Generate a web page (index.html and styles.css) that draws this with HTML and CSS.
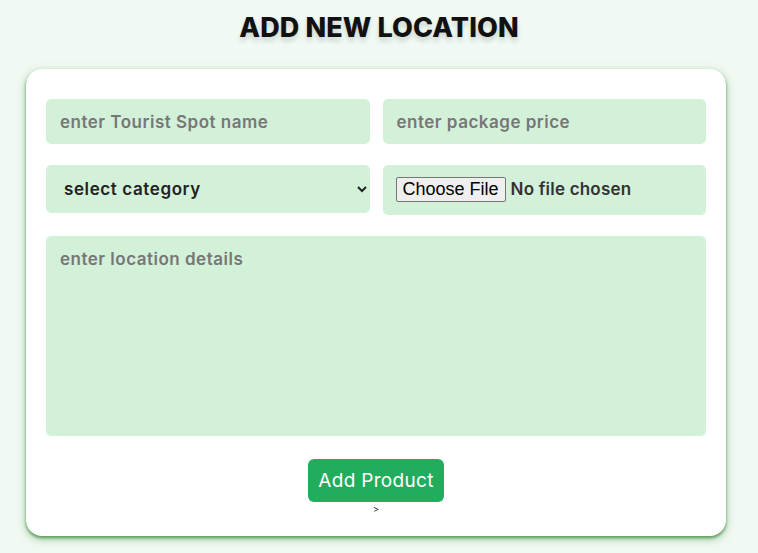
FILE: index.html
```html
<!DOCTYPE html>
<html lang="en">
<head>
<meta charset="utf-8">
<title>Add New Location</title>
<link rel="stylesheet" href="styles.css">
</head>
<body>
<h1 class="title">ADD NEW LOCATION</h1>
<form class="card">
  <div class="grid">
    <input class="field" type="text" placeholder="enter Tourist Spot name">
    <input class="field" type="text" placeholder="enter package price">
    <select class="field select">
      <option>select category</option>
    </select>
    <input class="field file" type="file">
    <textarea class="field area" placeholder="enter location details"></textarea>
  </div>
  <div class="actions">
    <button class="btn" type="button">Add Product</button>
    <span class="caret">&gt;</span>
  </div>
</form>
</body>
</html>
```
FILE: styles.css
```css
html, body {
  margin: 0;
  padding: 0;
}
body {
  background: #f0f9f2;
  font-family: Inter, "Noto Sans", sans-serif;
  width: 758px;
  height: 553px;
  overflow: hidden;
}
.title {
  margin: 0;
  padding-top: 11px;
  height: 58px;
  box-sizing: border-box;
  text-align: center;
  font-size: 27px;
  font-weight: 800;
  color: #111;
  text-shadow: 0 4px 5px rgba(0,0,0,0.15);
  letter-spacing: 0.1px;
}
.card {
  margin: 11px 0 0 26px;
  width: 700px;
  height: 467px;
  box-sizing: border-box;
  background: #fff;
  border-radius: 16px;
  box-shadow: 0 2px 3px #5f9f5f, 0 3px 9px rgba(90, 160, 90, 0.55);
  padding: 30px 20px 0 20px;
}
.grid {
  display: grid;
  grid-template-columns: minmax(0, 1fr) minmax(0, 1fr);
  column-gap: 13px;
  row-gap: 21px;
  align-items: start;
}
.field {
  width: 100%;
  min-width: 0;
  border: none;
  outline: none;
  background: #d3f0d9;
  border-radius: 5px;
  font-family: Inter, "Noto Sans", sans-serif;
  font-weight: 600;
  font-size: 17px;
  letter-spacing: 0.5px;
  color: #333;
  box-sizing: border-box;
  margin: 0;
}
.field::placeholder {
  color: #777;
}
input.field[type="text"] {
  height: 45px;
  padding: 0 14px;
}
.select {
  height: 48px;
  padding: 0 12px 0 14px;
  font-size: 17px;
  letter-spacing: 0.6px;
  color: #222;
}
.file {
  height: 50px;
  padding: 12px 13px;
  font-size: 17px;
  letter-spacing: 0.2px;
  color: #333;
}
.file::file-selector-button {
  font-family: "Liberation Sans", Arial, sans-serif;
  font-size: 18px;
  font-weight: 400;
  letter-spacing: 0;
  color: #000;
  background: #efefef;
  border: 1px solid #767676;
  border-radius: 2px;
  padding: 1px 6px;
  margin-right: 5px;
}
.area {
  grid-column: 1 / 3;
  height: 200px;
  resize: none;
  padding: 13px 14px;
}
.actions {
  display: flex;
  flex-direction: column;
  align-items: center;
  margin-top: 23px;
}
.btn {
  background: #22ad5c;
  color: #fff;
  border: none;
  border-radius: 6px;
  height: 43px;
  padding: 0 10px;
  font-family: Inter, "Noto Sans", sans-serif;
  font-size: 19px;
  letter-spacing: 0.3px;
  font-weight: 400;
}
.caret {
  font-size: 9px;
  line-height: 12px;
  margin-top: 1px;
  color: #222;
}
```
